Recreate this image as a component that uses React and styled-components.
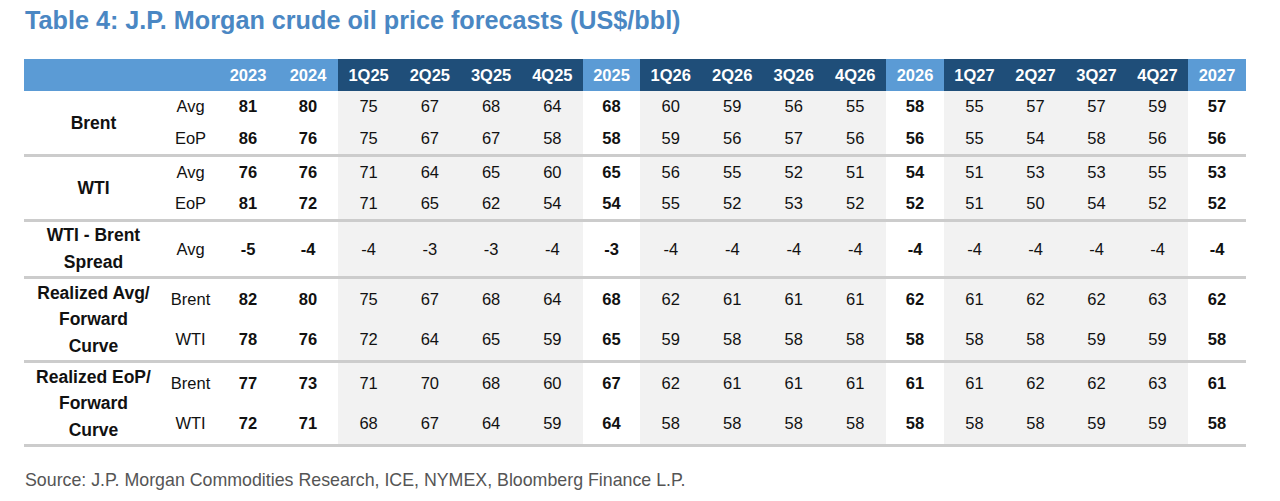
import React from 'react';
import styled, {createGlobalStyle} from "styled-components";

const GlobalStyle = createGlobalStyle`
  html, body {
    margin: 0;
    padding: 0;
    background: #ffffff;
  }
  body {
    font-family: "Liberation Sans", Arial, sans-serif;
  }
`;

const COLS = '139px 55px 60px 60px repeat(4, 61.25px) 57px repeat(4, 61.5px) 58px repeat(4, 61px) 58px';

const Page = styled.div`
  width: 1280px;
  height: 501px;
  padding: 5px 0 0 24px;
  box-sizing: border-box;
`;

const Title = styled.h1`
  margin: 0 0 24px 1px;
  height: 30px;
  line-height: 30px;
  font-size: 25.2px;
  font-weight: bold;
  color: #4a87c3;
`;

const Table = styled.div`
  width: 1222px;
  display: flex;
  flex-direction: column;
`;

const HeaderRow = styled.div`
  display: grid;
  grid-template-columns: ${COLS};
  height: 32px;
`;

const HeadCell = styled.div`
  background: ${props => (props.dark ? '#1f4e79' : '#5b9bd5')};
  color: #ffffff;
  font-weight: bold;
  font-size: 16.5px;
  display: flex;
  align-items: center;
  justify-content: center;
`;

const Group = styled.div`
  display: grid;
  grid-template-columns: ${COLS};
  grid-auto-rows: ${props => props.rowH}px;
  border-bottom: 3px solid #cccccc;
`;

const MainLabel = styled.div`
  grid-column: 1;
  grid-row: 1 / span ${props => props.span};
  display: flex;
  align-items: center;
  justify-content: center;
  text-align: center;
  font-weight: bold;
  font-size: 17.5px;
  line-height: ${props => props.lh}px;
  color: #111;
`;

const SubLabel = styled.div`
  grid-column: 2;
  display: flex;
  align-items: center;
  justify-content: center;
  font-size: 16.5px;
  color: #111;
`;

const Cell = styled.div`
  display: flex;
  align-items: center;
  justify-content: center;
  font-size: 16.5px;
  font-weight: ${props => (props.annual ? 'bold' : 'normal')};
  background: ${props => (props.annual ? '#ffffff' : '#f2f2f2')};
  color: #111;
`;

const Source = styled.div`
  margin-top: 23px;
  margin-left: 1px;
  font-size: 17.8px;
  line-height: 20px;
  color: #555555;
`;

const headers = ['2023', '2024', '1Q25', '2Q25', '3Q25', '4Q25', '2025', '1Q26', '2Q26', '3Q26', '4Q26', '2026', '1Q27', '2Q27', '3Q27', '4Q27', '2027'];
const isAnnual = h => !h.includes('Q');

const groups = [
    {label: ['Brent'], rowH: 31.5, lh: 22, rows: [
        ['Avg', [81, 80, 75, 67, 68, 64, 68, 60, 59, 56, 55, 58, 55, 57, 57, 59, 57]],
        ['EoP', [86, 76, 75, 67, 67, 58, 58, 59, 56, 57, 56, 56, 55, 54, 58, 56, 56]],
    ]},
    {label: ['WTI'], rowH: 31, lh: 22, rows: [
        ['Avg', [76, 76, 71, 64, 65, 60, 65, 56, 55, 52, 51, 54, 51, 53, 53, 55, 53]],
        ['EoP', [81, 72, 71, 65, 62, 54, 54, 55, 52, 53, 52, 52, 51, 50, 54, 52, 52]],
    ]},
    {label: ['WTI - Brent', 'Spread'], rowH: 54, lh: 27, rows: [
        ['Avg', [-5, -4, -4, -3, -3, -4, -3, -4, -4, -4, -4, -4, -4, -4, -4, -4, -4]],
    ]},
    {label: ['Realized Avg/', 'Forward', 'Curve'], rowH: 40.5, lh: 26.5, rows: [
        ['Brent', [82, 80, 75, 67, 68, 64, 68, 62, 61, 61, 61, 62, 61, 62, 62, 63, 62]],
        ['WTI', [78, 76, 72, 64, 65, 59, 65, 59, 58, 58, 58, 58, 58, 58, 59, 59, 58]],
    ]},
    {label: ['Realized EoP/', 'Forward', 'Curve'], rowH: 40.5, lh: 26.5, rows: [
        ['Brent', [77, 73, 71, 70, 68, 60, 67, 62, 61, 61, 61, 61, 61, 62, 62, 63, 61]],
        ['WTI', [72, 71, 68, 67, 64, 59, 64, 58, 58, 58, 58, 58, 58, 58, 59, 59, 58]],
    ]},
];

const App = () => {
    return (
        <Page>
            <GlobalStyle/>
            <Title>Table 4: J.P. Morgan crude oil price forecasts (US$/bbl)</Title>
            <Table>
                <HeaderRow>
                    <HeadCell/>
                    <HeadCell/>
                    {headers.map(h => (
                        <HeadCell key={h} dark={!isAnnual(h) ? 1 : 0}>{h}</HeadCell>
                    ))}
                </HeaderRow>
                {groups.map(g => (
                    <Group key={g.label.join(' ')} rowH={g.rowH}>
                        <MainLabel span={g.rows.length} lh={g.lh}>
                            <div>
                                {g.label.map(l => <div key={l}>{l}</div>)}
                            </div>
                        </MainLabel>
                        {g.rows.map(([sub, values], r) => (
                            <React.Fragment key={sub}>
                                <SubLabel style={{gridRow: r + 1}}>{sub}</SubLabel>
                                {values.map((v, i) => (
                                    <Cell key={i} annual={isAnnual(headers[i]) ? 1 : 0}
                                          style={{gridRow: r + 1, gridColumn: i + 3}}>
                                        {v}
                                    </Cell>
                                ))}
                            </React.Fragment>
                        ))}
                    </Group>
                ))}
            </Table>
            <Source>Source: J.P. Morgan Commodities Research, ICE, NYMEX, Bloomberg Finance L.P.</Source>
        </Page>
    );
};

export default App;
